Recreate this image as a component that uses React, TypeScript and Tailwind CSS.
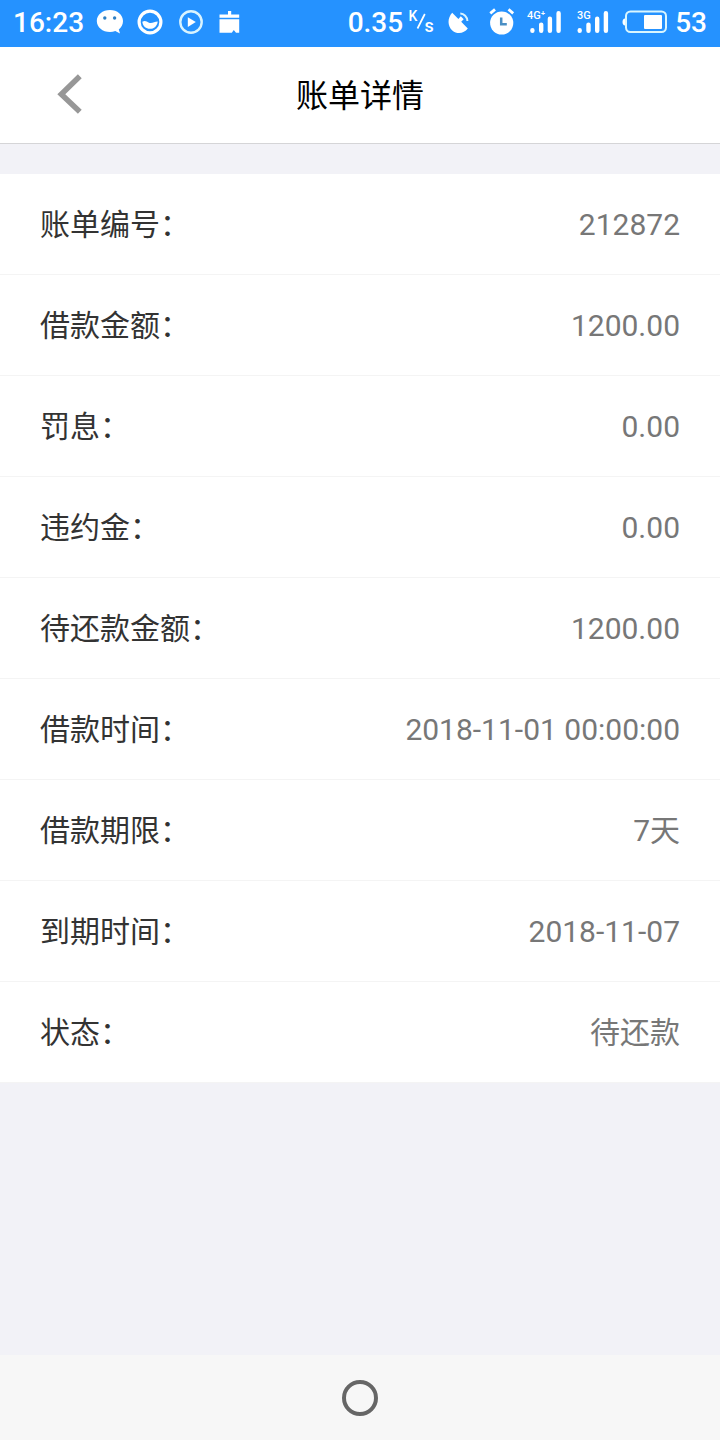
import React from 'react';

interface BillRow {
  label: string;
  value: string;
}

const rows: BillRow[] = [
  { label: '账单编号：', value: '212872' },
  { label: '借款金额：', value: '1200.00' },
  { label: '罚息：', value: '0.00' },
  { label: '违约金：', value: '0.00' },
  { label: '待还款金额：', value: '1200.00' },
  { label: '借款时间：', value: '2018-11-01 00:00:00' },
  { label: '借款期限：', value: '7天' },
  { label: '到期时间：', value: '2018-11-07' },
  { label: '状态：', value: '待还款' },
];

// ---- Status bar icons ----
const ChatIcon = () => (
  <svg width="28" height="26" viewBox="0 0 28 26" className="shrink-0">
    <path d="M14 1C6.500 1 .800 5.800 .800 12S6.500 23 14 23c1.900 0 3.700-.300 5.300-.900l4.700 2.500-1.200-4.100c2.600-2 4.200-5 4.200-8.500C27 5.800 21.300 1 14 1Z" fill="#fff" />
    <circle cx="8.800" cy="9" r="1.700" fill="#2d7fc4" />
    <circle cx="18.600" cy="9" r="1.700" fill="#2d7fc4" />
  </svg>
);

const WaveIcon = () => (
  <svg width="26" height="26" viewBox="0 0 26 26" className="shrink-0">
    <circle cx="13" cy="13" r="10.900" fill="none" stroke="#fff" strokeWidth="3.200" />
    <path d="M5.300 12.700c2.700-1.700 4.500-.300 6.200.700 3.200 1.700 5.700-.900 9.200-1-.400 4.600-3.700 7.400-7.700 7.400s-7.200-2.800-7.700-7.100Z" fill="#fff" />
  </svg>
);

const PlayIcon = () => (
  <svg width="24" height="24" viewBox="0 0 24 24" className="shrink-0">
    <circle cx="12" cy="12" r="10.700" fill="none" stroke="#d9f4ff" strokeWidth="2.400" />
    <path d="M8.800 7.300v9.600l8-4.800Z" fill="#fff" />
  </svg>
);

const BagIcon = () => (
  <svg width="22" height="24" viewBox="0 0 22 24" className="shrink-0">
    <path d="M9 1h3.200v3.500h8v3.200H.500V4.500H9Z" fill="#fff" />
    <path d="M.500 9.300h19.700V22.700h-3.200l-2.200-2.700-2 2.700H.500Z" fill="#fff" />
  </svg>
);

const SpeedUnit = () => (
  <svg width="26" height="26" viewBox="0 0 26 26" className="shrink-0 font-[Roboto,sans-serif]">
    <text x="-.5" y="11.500" fontSize="14" fontWeight="500" fill="#fff">K</text>
    <path d="M8.500 19.500 15.800 5" stroke="#fff" strokeWidth="1.700" />
    <text x="15.500" y="22.500" fontSize="18" fontWeight="500" fill="#fff">s</text>
  </svg>
);

const DishIcon = () => (
  <svg width="22" height="24" viewBox="0 0 22 24" className="shrink-0">
    <path d="M4.200 2.800 10.400 9l2.400-2.700 2.900 2.900-2.500 2.600L19.800 18.500c-3.800 5-10.600 6-15.500 1.900C-.700 16.200-.700 8.200 4.200 2.800Z" fill="#fff" />
    <path d="M12.300 3.500c3.600.100 7 3.200 7.100 7.500" fill="none" stroke="#d9f4ff" strokeWidth="2" />
  </svg>
);

const AlarmIcon = () => (
  <svg width="26" height="28" viewBox="0 0 26 28" className="shrink-0">
    <circle cx="12.700" cy="15" r="11.600" fill="#fff" />
    <path d="m1.300 5.400 4.700-4M19.500 1.400l4.700 4" stroke="#fff" strokeWidth="2.800" />
    <path d="M12.200 9.500v6.700h5.600" fill="none" stroke="#4a8fc4" strokeWidth="2.500" />
  </svg>
);

interface SignalIconProps {
  label: string;
  barsPath: string;
  width: number;
}

const SignalIcon = ({ label, barsPath, width }: SignalIconProps) => (
  <svg width={width} height="26" viewBox={`0 0 ${width} 26`} className="shrink-0 font-[Roboto,sans-serif]">
    <text x="0" y="9.500" fontSize="11" fontWeight="500" fill="#fff">{label}</text>
    <path d={barsPath} stroke="#fff" strokeWidth="4.400" strokeLinecap="round" />
  </svg>
);

const BatteryIcon = () => (
  <svg width="46" height="24" viewBox="0 0 46 24" className="shrink-0">
    <rect x="4" y="1.500" width="40" height="20.500" rx="4.500" fill="none" stroke="#d9f6ff" strokeWidth="2" />
    <path d="M3 8.500C1.500 8.500.500 10 .500 12s1 3.500 2.500 3.500Z" fill="#fff" />
    <rect x="22" y="5" width="18" height="14" rx="1" fill="#fff" />
  </svg>
);

const StatusBar = () => (
  <div className="flex h-[47px] items-center justify-between bg-[#2592ff] pr-[13px] pb-[3px] pl-[13px] font-[Roboto,sans-serif] text-[28px] leading-none font-medium text-white">
    <div className="flex items-center">
      <span className="w-[83px] pt-[2px]">16:23</span>
      <ChatIcon />
      <div className="ml-[13px] flex items-center gap-[16px]">
        <WaveIcon />
        <PlayIcon />
        <BagIcon />
      </div>
    </div>
    <div className="flex items-center">
      <span className="mr-[6px] pt-[2px]">0.35</span>
      <SpeedUnit />
      <div className="ml-[13px] flex items-center gap-[19px]">
        <DishIcon />
        <AlarmIcon />
      </div>
      <div className="ml-[12px] flex items-center gap-[14px]">
        <SignalIcon label="4G⁺" width={36} barsPath="M5.400 21.300v.500M14.200 15.600v6.200M22.900 9.800v12M31.600 4.200v17.600" />
        <SignalIcon label="3G" width={33} barsPath="M2.700 21.300v.500M11.500 15.600v6.200M20.200 9.800v12M28.900 4.200v17.600" />
      </div>
      <div className="ml-[12px]">
        <BatteryIcon />
      </div>
      <span className="ml-[7px] pt-[2px]">53</span>
    </div>
  </div>
);

const App: React.FC = () => {
  return (
    <div className="flex h-[1440px] w-[720px] flex-col bg-[#f2f2f7] font-[Roboto,'Noto_Sans_CJK_SC',sans-serif]" lang="zh-CN">
      <StatusBar />

      <header className="grid h-[97px] grid-cols-[1fr_auto_1fr] items-center border-b border-[#d5d5d7] bg-white">
        <button type="button" aria-label="返回" className="justify-self-start pb-[3px] pl-[57px]">
          <svg width="26" height="40" viewBox="0 0 26 40" fill="none">
            <path d="M22.800 2.300 4.300 20.200l18.500 17.600" stroke="#979797" strokeWidth="5.500" />
          </svg>
        </button>
        <h1 className="pt-[1px] text-[32px] leading-none text-black">账单详情</h1>
      </header>

      <main className="mt-[30px] bg-white">
        {rows.map((row) => (
          <div
            key={row.label}
            className="flex h-[101px] items-center justify-between border-b border-[#f4f4f4] px-10 text-[30px] leading-none"
          >
            <span className="pt-[2px] text-[#333]">{row.label}</span>
            <span className="pt-[2px] text-[#777]">{row.value}</span>
          </div>
        ))}
      </main>

      <nav className="mt-auto flex h-[85px] items-center justify-center bg-[#f7f7f7]">
        <button type="button" aria-label="主页" className="size-9 rounded-full border-4 border-[#666]" />
      </nav>
    </div>
  );
};

export default App;
